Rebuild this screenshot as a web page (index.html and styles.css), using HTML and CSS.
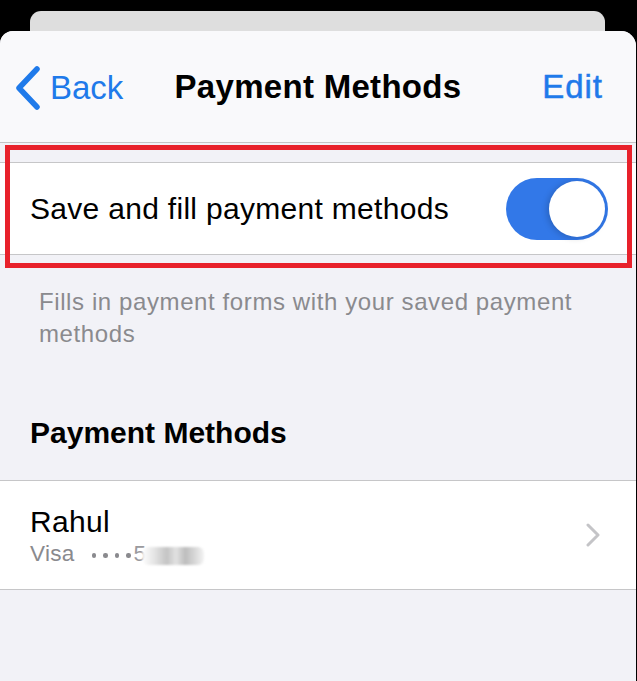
FILE: index.html
```html
<!DOCTYPE html>
<html>
<head>
<meta charset="utf-8">
<link rel="stylesheet" href="styles.css">
</head>
<body>
<div class="screen">
  <div class="top">
    <div class="behind-card"></div>
  </div>
  <div class="sheet">
    <div class="nav">
      <div class="nav-back">
        <svg class="back-chevron" width="26" height="44" viewBox="0 0 26 44">
          <polyline points="22,3 4,22 22,41" fill="none" stroke="#1f7aea" stroke-width="5.5" stroke-linecap="round" stroke-linejoin="round"/>
        </svg>
        <span class="back-text">Back</span>
      </div>
      <div class="nav-title">Payment Methods</div>
      <div class="nav-edit">Edit</div>
    </div>

    <div class="group first-group">
      <div class="row toggle-row">
        <span class="row-label">Save and fill payment methods</span>
        <div class="toggle"><div class="knob"></div></div>
      </div>
    </div>
    <div class="footer-note">Fills in payment forms with your saved payment methods</div>

    <div class="section-header">Payment Methods</div>
    <div class="group">
      <div class="row card-row">
        <div class="card-info">
          <div class="card-name">Rahul</div>
          <div class="card-sub">Visa <span class="dots"><i class="dot"></i><i class="dot"></i><i class="dot"></i><i class="dot"></i></span><span class="last">5</span><span class="smudge"></span></div>
        </div>
        <svg class="chevron" width="16" height="24" viewBox="0 0 16 24">
          <polyline points="3,2 13,12 3,22" fill="none" stroke="#c4c4c7" stroke-width="3" stroke-linecap="round" stroke-linejoin="round"/>
        </svg>
      </div>
    </div>
  </div>
  <div class="highlight"></div>
</div>
</body>
</html>
```

FILE: styles.css
```css
html, body {
  margin: 0;
  padding: 0;
  background: #000;
}
.screen {
  position: relative;
  width: 637px;
  height: 681px;
  overflow: hidden;
  font-family: "Liberation Sans", Arial, sans-serif;
  background: #000;
}
.top {
  height: 31px;
  padding-top: 11px;
  box-sizing: border-box;
}
.behind-card {
  margin: 0 32px 0 30px;
  height: 20px;
  background: #dedede;
  border-radius: 11px 11px 0 0;
}
.sheet {
  margin-right: 1px;
  height: 650px;
  background: #f2f2f7;
  border-radius: 13px 15px 0 0;
  overflow: hidden;
}
.nav {
  height: 112px;
  box-sizing: border-box;
  background: #f9f9fb;
  border-bottom: 1px solid #c4c4c6;
  display: flex;
  align-items: center;
  justify-content: space-between;
  padding: 0 33px 0 15px;
  position: relative;
}
.nav-back {
  display: flex;
  align-items: center;
  gap: 9px;
  color: #1f7aea;
  font-size: 33px;
  margin-top: 2px;
}
.back-chevron {
  display: block;
}
.nav-title {
  position: absolute;
  left: 0;
  right: 0;
  text-align: center;
  font-size: 33px;
  font-weight: bold;
  color: #000;
  pointer-events: none;
  letter-spacing: 0.3px;
}
.nav-edit {
  color: #1f7aea;
  font-size: 33px;
  letter-spacing: 1px;
  -webkit-text-stroke: 0.5px #1f7aea;
}
.group {
  background: #fff;
  border-top: 1px solid #c6c6c8;
  border-bottom: 1px solid #c6c6c8;
}
.first-group {
  margin-top: 19px;
}
.row {
  display: flex;
  align-items: center;
  justify-content: space-between;
  padding: 0 28px 0 30px;
}
.toggle-row {
  height: 91px;
}
.row-label {
  font-size: 30px;
  color: #000;
  letter-spacing: 0.3px;
}
.toggle {
  width: 102px;
  height: 62px;
  border-radius: 31px;
  background: #3278e8;
  position: relative;
}
.knob {
  position: absolute;
  right: 3px;
  top: 3px;
  width: 56px;
  height: 56px;
  border-radius: 50%;
  background: #fff;
  box-shadow: -2px 1px 6px rgba(0, 0, 0, 0.18);
}
.footer-note {
  padding: 31px 40px 0 39px;
  font-size: 24px;
  letter-spacing: 0.6px;
  line-height: 32px;
  color: #8a8a8e;
}
.section-header {
  padding: 66px 30px 0 30px;
  font-size: 30px;
  font-weight: bold;
  color: #000;
  height: 50px;
  margin-bottom: 14px;
}
.card-row {
  height: 108px;
  padding-right: 35px;
}
.card-info {
  display: flex;
  flex-direction: column;
  margin-top: 4px;
}
.card-name {
  font-size: 30px;
  color: #000;
  line-height: 34px;
  letter-spacing: 0.3px;
}
.card-sub {
  font-size: 22.5px;
  color: #8a8a8e;
  line-height: 30px;
  display: flex;
  align-items: center;
  letter-spacing: 0.3px;
}
.dots {
  display: flex;
  gap: 7px;
  margin-left: 17px;
  margin-top: 3px;
}
.dot {
  display: block;
  width: 4.5px;
  height: 4.5px;
  border-radius: 50%;
  background: #8a8a8e;
}
.last {
  margin-left: 3px;
  color: #9a9a9e;
}
.smudge {
  display: inline-block;
  width: 62px;
  height: 18px;
  margin-left: -4px;
  margin-top: 4px;
  border-radius: 6px;
  background: linear-gradient(90deg, rgba(255,255,255,0.9) 0%, #e4e4e4 20%, #c4c4c4 40%, #e2e2e2 55%, #bdbdbd 70%, #d8d8d8 85%, #f4f4f4 100%);
  filter: blur(1.2px);
}
.chevron {
  display: block;
}
.highlight {
  position: absolute;
  left: 5px;
  top: 145px;
  width: 627px;
  height: 123px;
  box-sizing: border-box;
  border: 5px solid #e8212b;
}
```
